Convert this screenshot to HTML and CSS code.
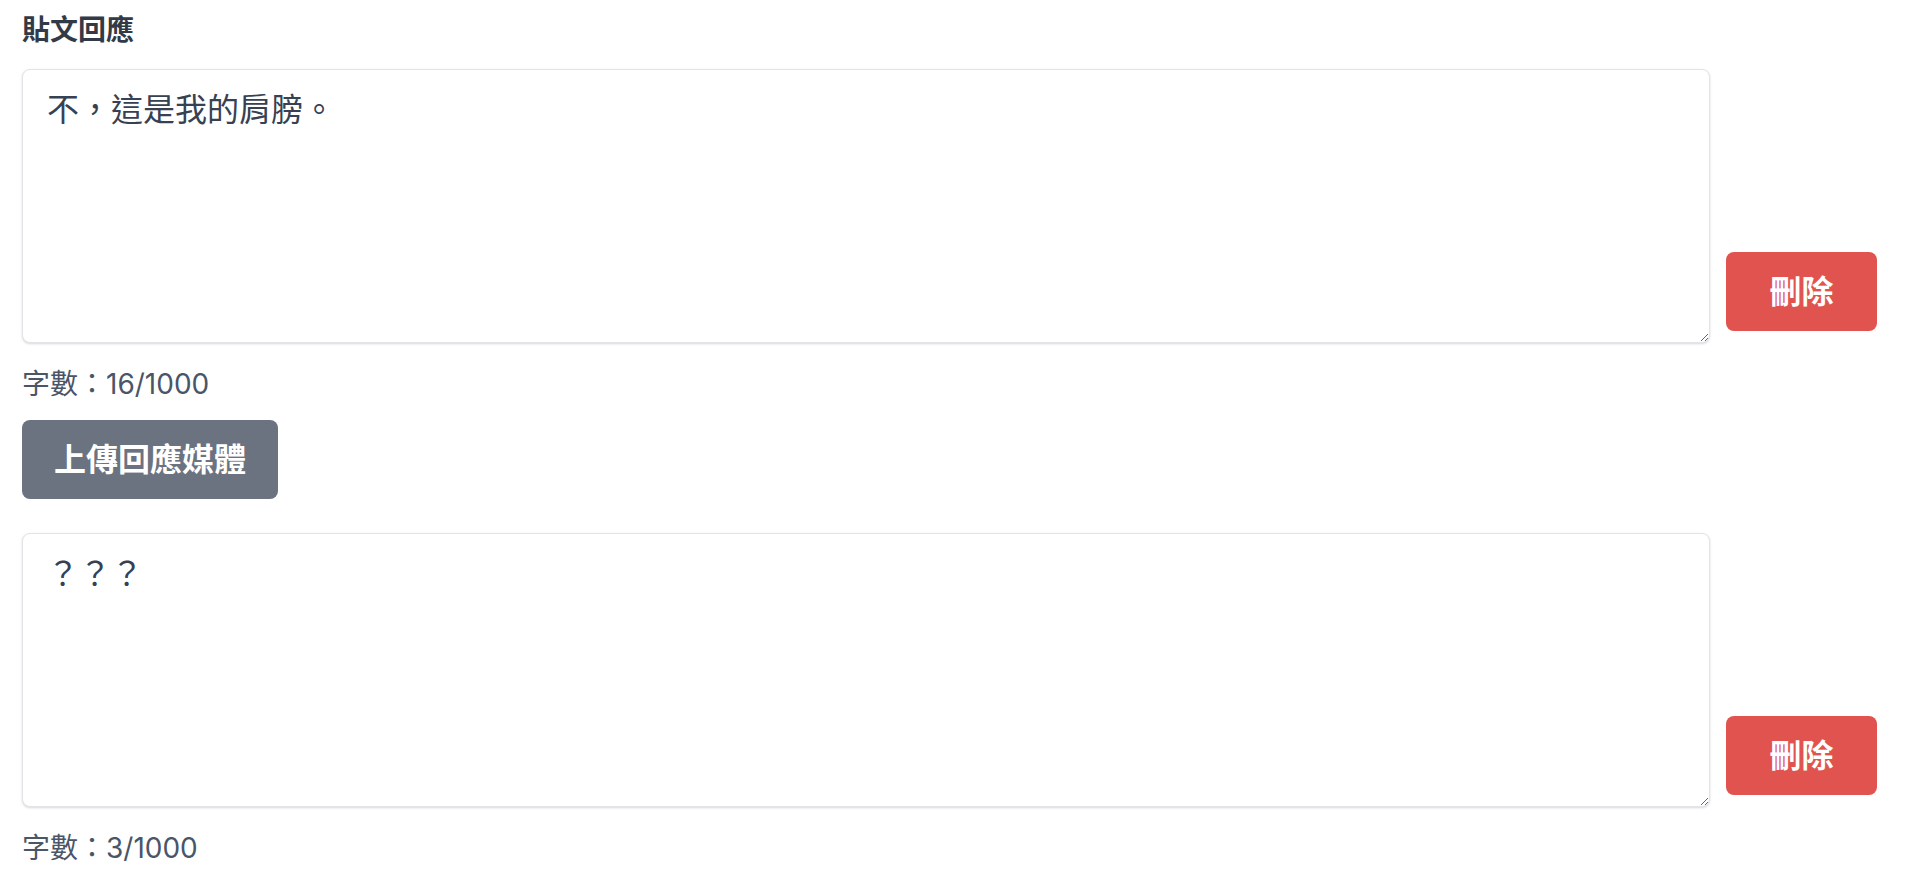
FILE: index.html
```html
<!DOCTYPE html>
<html lang="zh-Hant">
<head>
<meta charset="utf-8">
<title>貼文回應</title>
<link rel="stylesheet" href="styles.css">
</head>
<body>
<main class="page">
  <label class="field-label" for="reply-1">貼文回應</label>

  <div class="reply-row">
    <div class="reply-main">
      <textarea id="reply-1" class="reply-input" rows="5">不，這是我的肩膀。</textarea>
    </div>
    <button class="btn btn-danger" type="button">刪除</button>
  </div>
  <p class="counter">字數：16/1000</p>

  <button class="btn btn-secondary upload" type="button">上傳回應媒體</button>

  <div class="reply-row reply-row-second">
    <div class="reply-main">
      <textarea id="reply-2" class="reply-input" rows="5">？？？</textarea>
    </div>
    <button class="btn btn-danger" type="button">刪除</button>
  </div>
  <p class="counter">字數：3/1000</p>
</main>
<script src="script.js"></script>
</body>
</html>
```

FILE: styles.css
```css
html, body {
  margin: 0;
  padding: 0;
  background: #ffffff;
}

body {
  font-family: Inter, "Noto Sans CJK TC", sans-serif;
  color: #374151;
}

.page {
  padding: 10px 29px 0 22px;
  display: flex;
  flex-direction: column;
  align-items: flex-start;
}

.field-label {
  display: block;
  font-size: 28px;
  line-height: 40px;
  font-weight: 700;
  color: #323a48;
  margin-bottom: 19px;
}

.reply-row {
  display: flex;
  align-items: flex-end;
  gap: 16px;
  width: 100%;
}

.reply-row-second {
  margin-top: 34px;
}

.reply-main {
  flex: 1;
  min-width: 0;
}

.reply-input {
  display: block;
  box-sizing: border-box;
  width: 100%;
  height: 274px;
  margin: 0;
  padding: 16px 24px;
  border: 1px solid #e2e4e9;
  border-radius: 8px;
  box-shadow: 0 1px 3px rgba(0, 0, 0, 0.10), 0 1px 2px rgba(0, 0, 0, 0.06);
  font-family: Inter, "Noto Sans CJK TC", sans-serif;
  font-size: 32px;
  line-height: 48px;
  color: #374151;
  caret-color: #1f2937;
  background: #ffffff;
  outline: none;
}

.btn {
  border: 0;
  border-radius: 8px;
  font-family: Inter, "Noto Sans CJK TC", sans-serif;
  font-size: 32px;
  line-height: 47px;
  font-weight: 700;
  color: #ffffff;
  padding: 16px 32px;
  cursor: pointer;
}

.btn-danger {
  background: #e0534f;
  padding-left: 43.5px;
  padding-right: 43.5px;
  margin-bottom: 12px;
  flex: none;
}

.btn-secondary {
  background: #6b7280;
}

.upload {
  margin-top: 16px;
}

.counter {
  margin: 21px 0 0;
  font-size: 28px;
  line-height: 40px;
  color: #4a5568;
}
```

FILE: script.js
```js
var active = document.getElementById('reply-2');
active.focus();
active.setSelectionRange(active.value.length, active.value.length);
```
